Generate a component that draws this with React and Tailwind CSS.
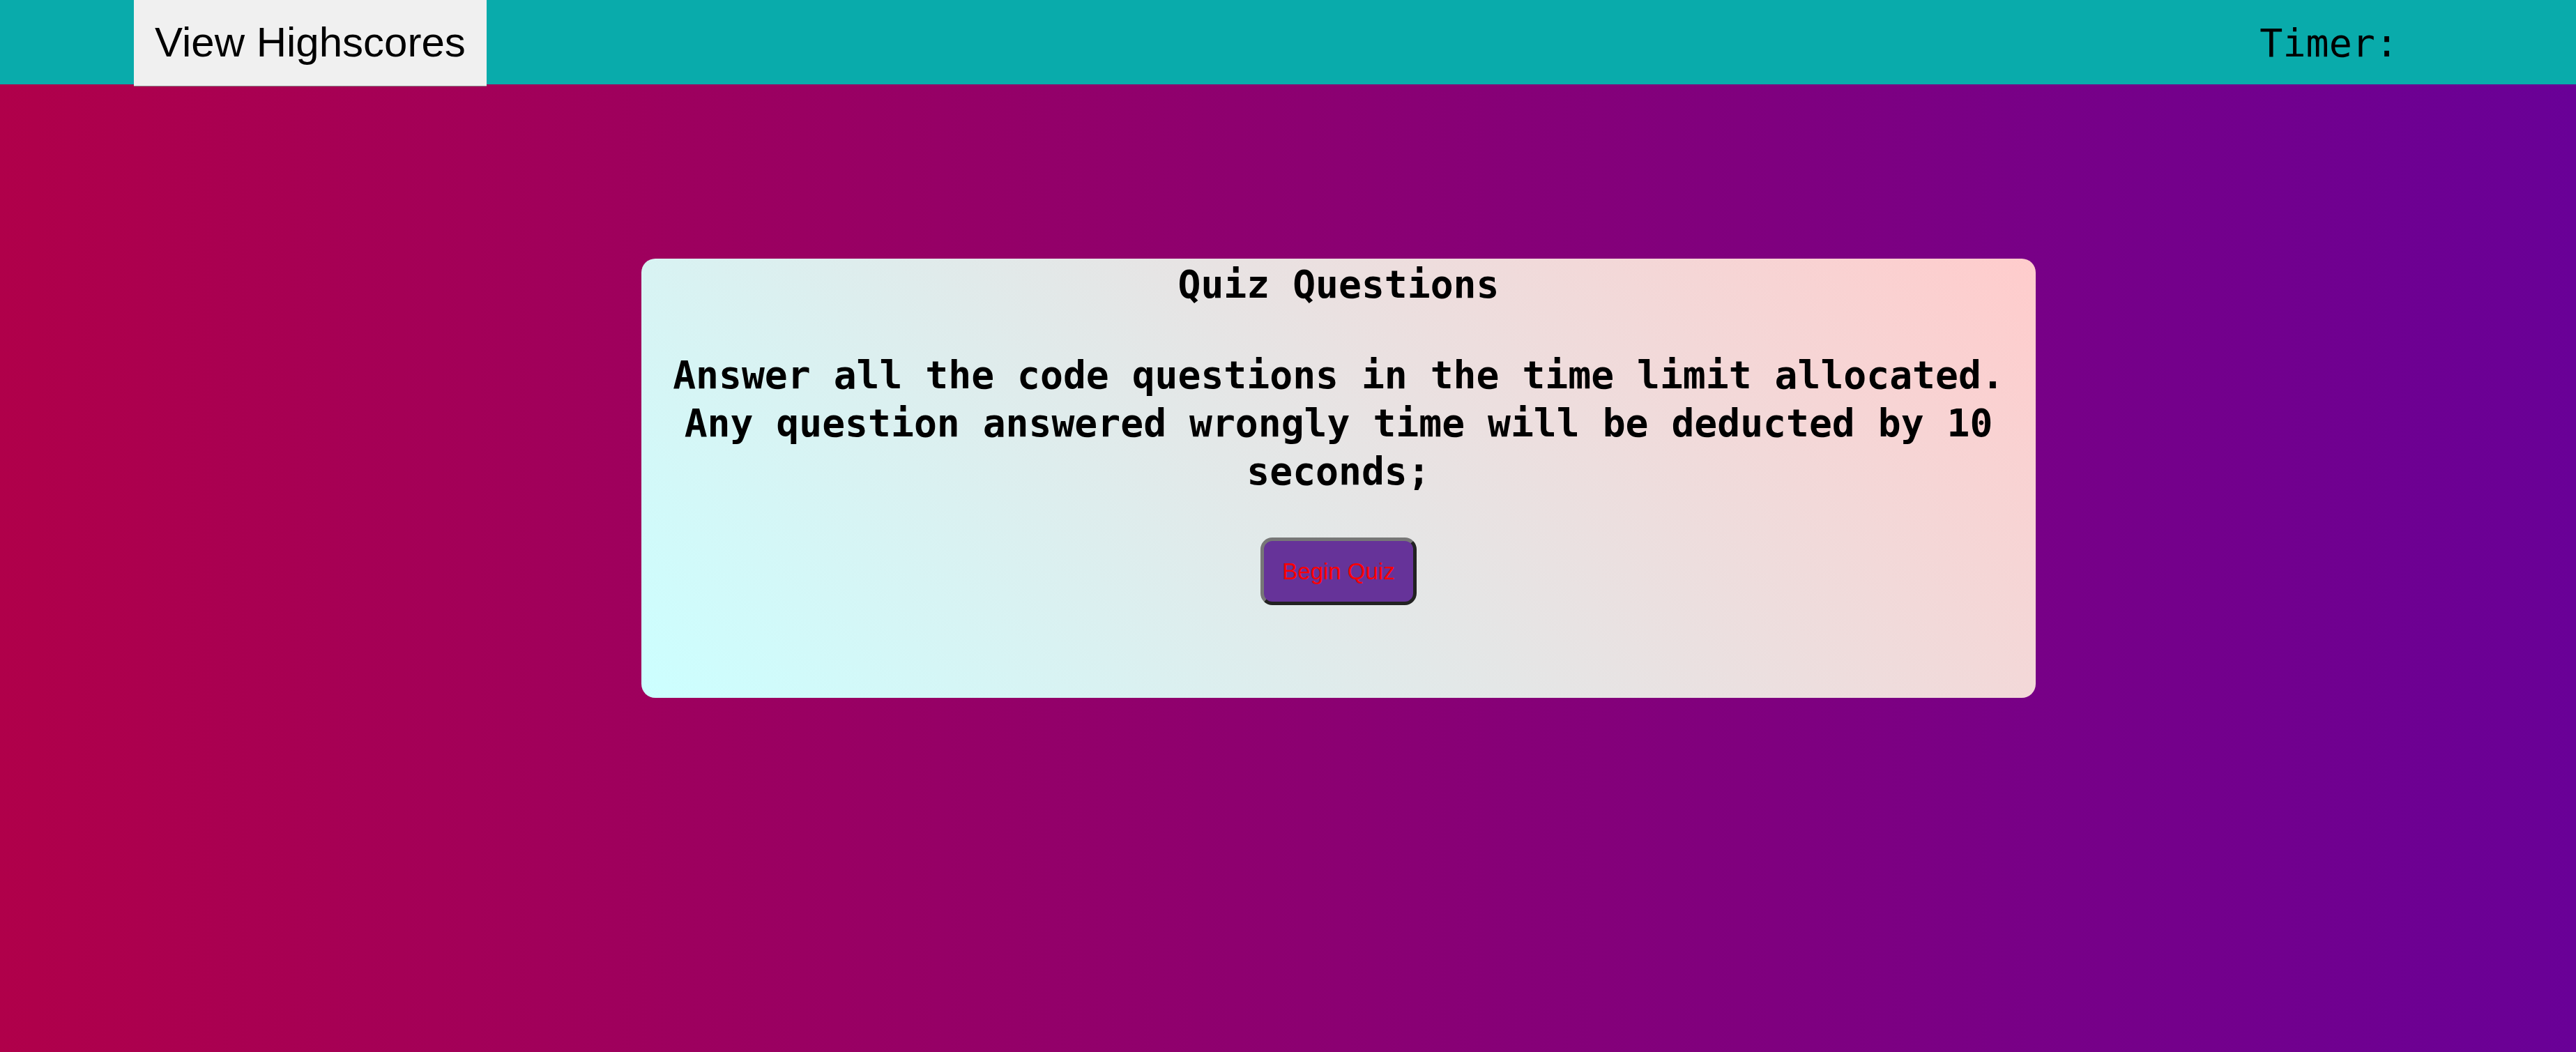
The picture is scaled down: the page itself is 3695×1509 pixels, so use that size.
export default function App() {
  return (
    <div className="min-h-[1509px] w-full bg-[linear-gradient(to_right,#b0004a,#690097)] font-['DejaVu_Sans_Mono',monospace]">
      <header className="flex h-[121px] items-start justify-between bg-[#09abab] pl-[192px] pr-[255px]">
        <button className="relative z-10 box-border flex h-[124px] items-center border-b border-[#8c8c8c] bg-[#f0f0f0] px-[30px] pb-[2px] font-['Liberation_Sans',Arial,sans-serif] text-[60px] leading-[67px] text-black">
          View Highscores
        </button>
        <div className="pt-[30px] text-[55px] leading-[64px] text-black">Timer:</div>
      </header>
      <main className="pt-[250px]">
        <section className="ml-[920px] box-border flex w-[2000px] flex-col items-center rounded-[20px] bg-[linear-gradient(45deg,#ccffff,#ffcccc)] px-[20px] pb-[133px] pt-[3px] text-center text-black">
          <h1 className="text-[54.7px] font-bold leading-[69px]">Quiz Questions</h1>
          <p className="mt-[61px] text-[54.7px] font-bold leading-[69px]">
            Answer all the code questions in the time limit allocated. Any question answered wrongly time will be deducted by 10 seconds;
          </p>
          <button className="mt-[60px] box-border h-[97px] w-[224px] rounded-[17px] border-[5px] border-solid border-t-[#777777] border-l-[#777777] border-b-[#222222] border-r-[#222222] bg-[#663399] font-['Liberation_Sans',Arial,sans-serif] text-[33px] leading-[38px] text-[#ff0000]">
            Begin Quiz
          </button>
        </section>
      </main>
    </div>
  );
}
